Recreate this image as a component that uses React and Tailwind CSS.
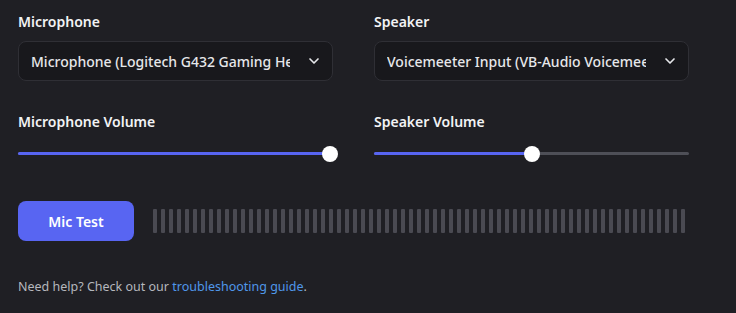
import { ChevronDown } from "lucide-react";

function Select({ label, value }) {
  return (
    <div className="w-[315px]">
      <div className="text-[14px] font-semibold leading-5 text-[#f2f3f5] mb-[9px]">{label}</div>
      <div className="h-10 rounded-lg border border-[#2f2f35] bg-[#18181c] flex items-center pl-[12px] pr-[10px]">
        <span className="flex-1 overflow-hidden whitespace-nowrap text-[14px] font-medium text-[#e6e7ea]">
          {value}
        </span>
        <ChevronDown size={16} strokeWidth={2.5} className="text-[#e6e7ea] ml-4 shrink-0" />
      </div>
    </div>
  );
}

function Slider({ label, pct }) {
  return (
    <div className="w-[315px]">
      <div className="text-[14px] font-semibold leading-5 text-[#f2f3f5]">{label}</div>
      <div className="relative h-4 mt-[14px]">
        <div className="absolute left-0 right-0 top-[6px] h-[3px] rounded-full bg-[#4e4f57]" />
        <div
          className="absolute left-0 top-[6px] h-[3px] rounded-full bg-[#5865f2]"
          style={{ width: `${pct}%` }}
        />
        <div
          className="absolute top-0 w-4 h-4 -ml-2 rounded-full bg-white"
          style={{ left: `${pct}%` }}
        />
      </div>
    </div>
  );
}

export default function App() {
  const bars = Array.from({ length: 67 });
  return (
    <div className="w-[736px] h-[313px] bg-[#1f1f24] pl-[18px] pt-[12px] font-['Noto_Sans',sans-serif]">
      <div className="flex gap-[41px]">
        <Select label="Microphone" value="Microphone (Logitech G432 Gaming Headset)" />
        <Select label="Speaker" value="Voicemeeter Input (VB-Audio Voicemeeter VAIO)" />
      </div>
      <div className="flex gap-[41px] mt-[31px]">
        <Slider label="Microphone Volume" pct={99} />
        <Slider label="Speaker Volume" pct={50} />
      </div>
      <div className="flex items-center mt-[39px]">
        <button className="w-[116px] h-10 rounded-lg bg-[#5865f2] text-white text-[14px] font-semibold">
          Mic Test
        </button>
        <div className="flex gap-[4px] ml-[19px]">
          {bars.map((_, i) => (
            <div key={i} className="w-[4px] h-6 rounded-[1px] bg-[#4a4a52]" />
          ))}
        </div>
      </div>
      <p className="mt-[37px] text-[12.5px] text-[#b5b7bd]">
        Need help? Check out our <span className="text-[#4f97ea]">troubleshooting guide</span>.
      </p>
    </div>
  );
}
